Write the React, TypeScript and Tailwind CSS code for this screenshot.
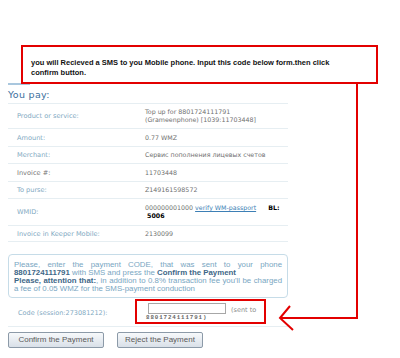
const rows: { label: string; h: string; value: React.ReactNode; dark?: boolean }[] = [
  {
    label: "Product or service:",
    h: "h-[25px]",
    value: (
      <>
        Top up for 8801724111791
        <br />
        (Grameenphone) [1039:11703448]
      </>
    ),
  },
  { label: "Amount:", h: "h-[18px]", value: "0.77 WMZ" },
  { label: "Merchant:", h: "h-[17px]", value: "Сервис пополнения лицевых счетов" },
  { label: "Invoice #:", h: "h-[18px]", value: "11703448", dark: true },
  { label: "To purse:", h: "h-[17px]", value: "Z149161598572" },
  {
    label: "WMID:",
    h: "h-[27px]",
    value: (
      <>
        000000001000{" "}
        <span className="text-[#3d7fb5] underline">verify WM-passport</span>
        <span className="ml-[12px] font-bold text-black">BL:</span>
        <br />
        <span className="ml-[2px] font-bold text-black">5006</span>
      </>
    ),
  },
  { label: "Invoice in Keeper Mobile:", h: "h-[16px]", value: "2130099" },
];

export default function App() {
  return (
    <div className="relative h-[358px] w-[400px] overflow-hidden bg-white font-['DejaVu_Sans',sans-serif]">
      <div className="pl-[8px] pt-[83px] w-[288px]">
        <div className="h-[2px] w-[22px] bg-[#a9c7de]" />
        <div className="mt-[3px] h-[14px] text-[9.5px] leading-[14px] tracking-[0.3px] text-[#3b6e9c]">
          You pay:
        </div>
        <div className="mt-[1px] border-t border-[#e6eef2]">
          {rows.map((r) => (
            <div
              key={r.label}
              className={`flex items-center border-b border-[#e6eef2] text-[6.3px] leading-[8px] ${r.h}`}
            >
              <div
                className={`w-[137px] shrink-0 pl-[9px] text-[6.6px] ${r.dark ? "text-[#777]" : "text-[#7fa9c2]"}`}
              >
                {r.label}
              </div>
              <div className="text-[#707070]">{r.value}</div>
            </div>
          ))}
        </div>

        <div className="mt-[12px] h-[44px] rounded-[4px] border border-[#c6dce8] px-[5px] pt-[6px] font-['Liberation_Sans',sans-serif] text-[7.85px] leading-[8px] text-[#79a6c2]">
          <div className="text-justify [text-align-last:justify]">
            Please, enter the payment CODE, that was sent to your phone
          </div>
          <div>
            <b className="text-[#3e6787]">8801724111791</b> with SMS and press the{" "}
            <b className="text-[#3e6787]">Confirm the Payment</b>
          </div>
          <div className="text-justify [text-align-last:justify]">
            <b className="text-[#3e6787]">Please, attention that:</b>, in addition to 0.8% transaction fee you'll be charged
          </div>
          <div>a fee of 0.05 WMZ for the SMS-payment conduction</div>
        </div>

        <div className="flex h-[29px] items-start border-b border-[#e6eef2] text-[6.5px] leading-[8px]">
          <div className="w-[140px] shrink-0 pl-[10px] pt-[11px] text-[#7fa9c2]">Code (session:273081212):</div>
          <div className="flex w-[120px] flex-col pt-[5px]">
            <div className="flex items-end">
              <div className="h-[11px] w-[78px] shrink-0 border border-[#a7a7a7] bg-white" />
              <span className="ml-[5px] text-[#8a8a8a]">(sent to</span>
            </div>
            <div className="-ml-[2px] font-['Liberation_Mono',monospace] text-[5.8px] font-bold leading-[8px] tracking-[0.9px] text-[#666]">
              8801724111791)
            </div>
          </div>
        </div>

        <div className="mt-[5px] flex gap-[13px] font-['Liberation_Sans',sans-serif] text-[8px] text-[#5a5a5a]">
          <div className="flex h-[16px] w-[96px] items-center justify-center rounded-[2px] border border-[#8c9aa8] bg-gradient-to-b from-[#f7f9fb] to-[#d9e0e8]">
            Confirm the Payment
          </div>
          <div className="flex h-[16px] w-[86px] items-center justify-center rounded-[2px] border border-[#8c9aa8] bg-gradient-to-b from-[#f7f9fb] to-[#d9e0e8]">
            Reject the Payment
          </div>
        </div>
      </div>

      <div className="absolute left-[21px] top-[45px] h-[39px] w-[357px] border-2 border-[#e30000] bg-white pl-[8px] pt-[11px] font-['Liberation_Sans',sans-serif] text-[7.5px] font-bold leading-[10px] text-[#111]">
        you will Recieved a SMS to you Mobile phone. Input this code below form.then click
        <br />
        confirm button.
      </div>

      <div className="absolute left-[135px] top-[299px] h-[25px] w-[131px] border-2 border-[#e30000]" />

      <svg className="absolute left-0 top-0" width="400" height="358" fill="none" stroke="#e30000" strokeWidth="2">
        <polyline points="357,84 357,318 281,318" />
        <polyline points="290,306 280,318 293,330" />
      </svg>
    </div>
  );
}
